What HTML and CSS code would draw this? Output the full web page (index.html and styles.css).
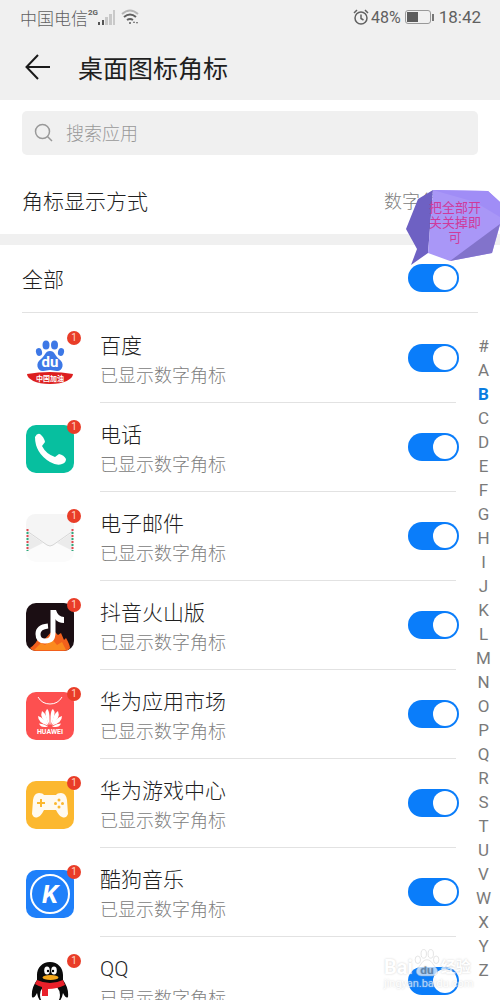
FILE: index.html
```html
<!DOCTYPE html>
<html lang="zh-CN">
<head>
  <meta charset="UTF-8">
  <meta name="viewport" content="width=device-width, initial-scale=1">
  <title>桌面图标角标</title>
  <link rel="stylesheet" href="styles.css">
</head>
<body>

  <div class="screen">

    <!-- Status bar -->
    <div class="status-bar">
      <div class="status-left">
        <span>中国电信</span>
        <span class="network">2G</span>
        <svg class="signal" width="17" height="15" viewBox="0 0 17 15">
          <path d="M0 12h2v3H0zM4 10h2v5H4z" fill="#555"/>
          <path d="M7 7h3v8H7zM11 4h3v11h-3zM15 0h2v15h-2z" fill="#c9c9c9"/>
        </svg>
        <svg width="18" height="16" viewBox="0 0 18 16" fill="none" stroke="#606060" stroke-width="2">
          <path d="M1 5Q9-2 17 5" stroke="#b5b5b5"/>
          <path d="M3 8Q9 3 15 8M6 11Q9 9 12 11"/>
          <circle cx="9" cy="14" r="1" fill="#606060" stroke="none"/>
          <path d="M12 14l1-2 1 2zM15 13l1 2 1-2z" fill="#606060" stroke="none"/>
        </svg>
      </div>
      <div class="status-right">
        <svg width="16" height="16" viewBox="0 0 16 16" fill="none" stroke="#606060" stroke-width="1.5">
          <circle cx="8" cy="9" r="6"/>
          <path d="M8 5.5v4l2.500 1.5M1 4l3-3M15 4l-3-3"/>
        </svg>
        <span class="percent">48%</span>
        <svg class="battery" width="29" height="14" viewBox="0 0 29 14">
          <rect x="0.5" y="0.5" width="25" height="13" rx="2.5" fill="none" stroke="#999"/>
          <path d="M2 2h11v10H2z" fill="#5c5c5c"/>
          <path d="M27 4h2v7h-2z" fill="#777"/>
        </svg>
        <span>18:42</span>
      </div>
    </div>

    <!-- Title bar -->
    <header class="title-bar">
      <button class="back-btn" aria-label="返回">
        <svg width="26" height="26" viewBox="0 0 26 26" fill="none" stroke="#1a1a1a" stroke-width="2">
          <path d="M25 13H2M13 1L1.5 13 13 25"/>
        </svg>
      </button>
      <h1>桌面图标角标</h1>
    </header>

    <!-- Search -->
    <label class="search-box">
      <svg width="20" height="20" viewBox="0 0 20 20" fill="none" stroke="#999" stroke-width="1.5">
        <circle cx="8.5" cy="8.5" r="7"/>
        <path d="M13.5 13.5L18 18"/>
      </svg>
      <input type="search" placeholder="搜索应用" aria-label="搜索应用">
    </label>

    <!-- Badge style -->
    <div class="mode-row">
      <span>角标显示方式</span>
      <span class="mode-value">数字角标</span>
      <div class="tip">
        <svg width="95" height="76" viewBox="0 0 95 76">
          <path d="M13 9L28 0 23 63 6 75 12 59 1 39z" fill="#6e61c3"/>
          <path d="M28 0L83 1 95 12V35L87 63 45 71 23 63z" fill="#a997f7"/>
          <path d="M28 0L83 1 95 12V27L70 12z" fill="#a08df6"/>
          <path d="M45 71L95 34 87 63z" fill="#8273cb"/>
        </svg>
        <p>把全部开关关掉即可</p>
      </div>
    </div>

    <div class="all-row">
      <label for="all">全部</label>
      <input type="checkbox" class="switch" id="all" checked>
    </div>

    <!-- App list -->
    <div class="list-area">
      <ul class="app-list">
        <li class="app">
          <div class="app-icon">
            <svg viewBox="0 0 48 48">
              <g fill="#3d78e6">
                <ellipse cx="13" cy="16" rx="3" ry="4" transform="rotate(-15 13 16)"/>
                <ellipse cx="20" cy="9" rx="3.5" ry="4.5"/>
                <ellipse cx="28.5" cy="9" rx="3.5" ry="4.5"/>
                <ellipse cx="35" cy="16" rx="3" ry="4" transform="rotate(15 35 16)"/>
                <path d="M24 15c5 0 5 5 9 8 6 4 4 12-2 12-3 0-4-1-7-1s-4 1-7 1c-6 0-8-8-2-12 4-3 4-8 9-8z"/>
              </g>
              <text x="24" y="31" class="du">du</text>
              <path d="M1 38q23-4 46 0c0 5-9 10-23 10S1 43 1 38z" fill="#dc1e1e"/>
              <text x="24" y="45" class="ribbon">中国加油</text>
            </svg>
            <span class="badge">1</span>
          </div>
          <div class="app-body">
            <label for="baidu">百度<small>已显示数字角标</small></label>
            <input type="checkbox" class="switch" id="baidu" checked>
          </div>
        </li>
        <li class="app">
          <div class="app-icon">
            <svg viewBox="0 0 48 48">
              <rect width="48" height="48" rx="10" fill="#07bf9f"/>
              <path d="M9 12q2-4 5-3 4 3 5 8l-3 4q4 8 13 11l4-3q5 1 7 5 0 4-4 5-5 2-12-2Q9 28 9 12z" fill="#fff"/>
            </svg>
            <span class="badge">1</span>
          </div>
          <div class="app-body">
            <label for="phone">电话<small>已显示数字角标</small></label>
            <input type="checkbox" class="switch" id="phone" checked>
          </div>
        </li>
        <li class="app">
          <div class="app-icon">
            <svg viewBox="0 0 48 48">
              <rect width="48" height="48" rx="10" fill="#fbfbfb"/>
              <path d="M1 18L17 29 1 37zM47 18L31 29l16 8z" fill="#ebebeb"/>
              <path d="M0 12Q0 0 10 0h28q10 0 10 12v4L27 31q-3 2-6 0L0 16z" fill="#f5f5f5"/>
              <path d="M1 17l20 14q3 2 6 0l20-14" fill="none" stroke="#d6d6d6"/>
              <path d="M1.5 15v22M46.5 15v22" stroke="#e0474f" stroke-width="2" stroke-dasharray="2 4"/>
              <path d="M1.5 18v19M46.5 18v19" stroke="#2fa77c" stroke-width="2" stroke-dasharray="2 4"/>
            </svg>
            <span class="badge">1</span>
          </div>
          <div class="app-body">
            <label for="mail">电子邮件<small>已显示数字角标</small></label>
            <input type="checkbox" class="switch" id="mail" checked>
          </div>
        </li>
        <li class="app">
          <div class="app-icon">
            <svg viewBox="0 0 48 48">
              <rect width="48" height="48" rx="10" fill="#1b0e13"/>
              <path d="M4 45q6-4 9-11l5 3 9-10 5 5 3-2 3 7 2-2q4 7 4 10-2 3-6 3H10q-4 0-6-3z" fill="#f2601c"/>
              <path d="M8 47l7-7 4 2 7-6 5 6 5-3 4 8z" fill="#fb8a1e"/>
              <path d="M27 7v23q0 8-8 8-7 0-7-7t10-8" fill="none" stroke="#fff" stroke-width="5"/>
              <path d="M25 7h5q2 7 8 7v6q-6 0-9-4z" fill="#fff"/>
            </svg>
            <span class="badge">1</span>
          </div>
          <div class="app-body">
            <label for="douyin">抖音火山版<small>已显示数字角标</small></label>
            <input type="checkbox" class="switch" id="douyin" checked>
          </div>
        </li>
        <li class="app">
          <div class="app-icon">
            <svg viewBox="0 0 48 48">
              <rect width="48" height="48" rx="10" fill="#fd5050"/>
              <path d="M12 5q4 7 12 7t12-7" fill="none" stroke="#fff"/>
              <g fill="#fff">
                <path d="M23.5 33Q17 21 21 17q3 1 2.500 16z"/>
                <path d="M24.5 33Q31 21 27 17q-3 1-2.500 16z"/>
                <path d="M22.5 33Q13 26 16 19q5 3 6.500 14z"/>
                <path d="M25.5 33Q35 26 32 19q-5 3-6.500 14z"/>
                <path d="M22 33.5Q12 31 12 24q6 2 10 9.500z"/>
                <path d="M26 33.5Q36 31 36 24q-6 2-10 9.500z"/>
                <path d="M22 34.5q-7 2-9-3 4 0 9 3z"/>
                <path d="M26 34.5q7 2 9-3-4 0-9 3z"/>
              </g>
              <text x="24" y="42" class="huawei">HUAWEI</text>
            </svg>
            <span class="badge">1</span>
          </div>
          <div class="app-body">
            <label for="market">华为应用市场<small>已显示数字角标</small></label>
            <input type="checkbox" class="switch" id="market" checked>
          </div>
        </li>
        <li class="app">
          <div class="app-icon">
            <svg viewBox="0 0 48 48">
              <rect width="48" height="48" rx="10" fill="#fcb82f"/>
              <path d="M13 12q4 0 5 2h12q1-2 5-2 5 0 6 7l1 14q-2 5-6 3-3-1-6-7H18q-3 6-6 7-4 2-6-3l1-14q1-7 6-7z" fill="#fffaf0"/>
              <path d="M15 18v8M11 22h8" stroke="#fcb82f" stroke-width="2"/>
              <g fill="#fcb82f">
                <circle cx="33" cy="19" r="1.5"/><circle cx="33" cy="26" r="1.5"/>
                <circle cx="29.5" cy="22.5" r="1.5"/><circle cx="36.5" cy="22.5" r="1.5"/>
              </g>
            </svg>
            <span class="badge">1</span>
          </div>
          <div class="app-body">
            <label for="game">华为游戏中心<small>已显示数字角标</small></label>
            <input type="checkbox" class="switch" id="game" checked>
          </div>
        </li>
        <li class="app">
          <div class="app-icon">
            <svg viewBox="0 0 48 48">
              <rect width="48" height="48" rx="10" fill="#1f80fa"/>
              <circle cx="24" cy="24" r="19" fill="none" stroke="#fff" stroke-width="2"/>
              <text x="24" y="33" class="kugou">K</text>
            </svg>
            <span class="badge">1</span>
          </div>
          <div class="app-body">
            <label for="kugou">酷狗音乐<small>已显示数字角标</small></label>
            <input type="checkbox" class="switch" id="kugou" checked>
          </div>
        </li>
        <li class="app">
          <div class="app-icon">
            <svg viewBox="0 0 48 48">
              <path d="M24 3c8 0 13 6 13 13v5q6 8 5 17-2 2-5-4-2 12-13 12T11 34q-3 6-5 4-1-9 5-17v-5C11 9 16 3 24 3z" fill="#0b0b0b"/>
              <ellipse cx="24" cy="36" rx="10" ry="11" fill="#fff"/>
              <ellipse cx="21" cy="11.5" rx="2.8" ry="4" fill="#fff"/>
              <ellipse cx="28" cy="11.5" rx="2.8" ry="4" fill="#fff"/>
              <circle cx="22" cy="12" r="1.2"/><circle cx="27" cy="12" r="1.2"/>
              <ellipse cx="24.5" cy="18.5" rx="8" ry="2.5" fill="#f5a81c"/>
              <path d="M11 21q13 6 26 0l2 5q-8 4-17 4v7h-6v-9q-4-1-7-3z" fill="#e8202a"/>
              <ellipse cx="17" cy="46" rx="7" ry="2" fill="#f5a81c"/>
              <ellipse cx="31" cy="46" rx="7" ry="2" fill="#f5a81c"/>
            </svg>
            <span class="badge">1</span>
          </div>
          <div class="app-body">
            <label for="qq">QQ<small>已显示数字角标</small></label>
            <input type="checkbox" class="switch" id="qq" checked>
          </div>
        </li>
      </ul>

      <nav class="letters">
        <a href="#">#</a><a href="#">A</a><a href="#" class="active">B</a><a href="#">C</a><a href="#">D</a><a href="#">E</a><a href="#">F</a><a href="#">G</a><a href="#">H</a><a href="#">I</a><a href="#">J</a><a href="#">K</a><a href="#">L</a><a href="#">M</a><a href="#">N</a><a href="#">O</a><a href="#">P</a><a href="#">Q</a><a href="#">R</a><a href="#">S</a><a href="#">T</a><a href="#">U</a><a href="#">V</a><a href="#">W</a><a href="#">X</a><a href="#">Y</a><a href="#">Z</a>
      </nav>
    </div>

    <!-- Watermark -->
    <div class="watermark">
      <div class="mark-logo">
        <span>Bai</span>
        <svg width="28" height="28" viewBox="0 0 24 26" fill="#fff" stroke="#bbb" stroke-width="0.5">
          <ellipse cx="3.5" cy="10" rx="2.5" ry="3.5"/>
          <ellipse cx="9" cy="4.5" rx="2.5" ry="4"/>
          <ellipse cx="15.5" cy="4.5" rx="2.5" ry="4"/>
          <ellipse cx="20.5" cy="10" rx="2.5" ry="3.5"/>
          <path d="M12 10c4 0 5 4 8 7 4 4 1 8-3 8H7c-4 0-7-4-3-8 3-3 4-7 8-7z"/>
          <text x="12" y="23" class="mark-du">du</text>
        </svg>
        <span class="mark-cn">经验</span>
      </div>
      <div class="mark-url">jingyan.baidu.com</div>
    </div>

  </div>

</body>
</html>
```
FILE: styles.css
```css
* {
  box-sizing: border-box;
}

body {
  margin: 0;
  background: #fff;
  color: #1f1f1f;
  font-family: Roboto, "Noto Sans CJK SC", sans-serif;
  font-weight: 300;
}

.screen {
  position: relative;
  display: flex;
  flex-direction: column;
  height: 100vh;
  overflow: hidden;
}

/* status bar */
.status-bar {
  display: flex;
  flex: none;
  justify-content: space-between;
  height: 34px;
  padding: 0 19px 0 20px;
  background: #f0f0f0;
  color: #606060;
  font-size: 17px;
  font-weight: 400;
}

.status-left,
.status-right {
  display: flex;
  align-items: center;
}

.status-left {
  font-weight: 300;
}

.network {
  align-self: flex-start;
  padding-top: 8px;
  font-size: 8px;
  line-height: 9px;
  font-weight: 700;
}

.signal {
  margin-right: 6px;
}

.percent {
  margin-left: 2px;
  font-size: 16px;
}

.battery {
  margin: 0 5px 0 4px;
}

/* title */
.title-bar {
  display: flex;
  flex: none;
  align-items: center;
  gap: 27px;
  height: 66px;
  padding: 0 25px;
  background: #f0f0f0;
}

.back-btn {
  display: flex;
  padding: 0;
  border: none;
  background: none;
}

h1 {
  margin: 0;
  font-size: 25px;
  font-weight: 400;
}

/* search */
.search-box {
  display: flex;
  flex: none;
  align-items: center;
  gap: 12px;
  height: 44px;
  margin: 11px 22px 0;
  padding: 0 12px;
  border-radius: 5px;
  background: #f0f0f0;
}

.search-box input {
  flex: 1;
  min-width: 0;
  padding: 0;
  border: none;
  outline: none;
  background: none;
  font: inherit;
  font-size: 18px;
}

.search-box input::placeholder {
  color: #999;
}

/* settings rows */
.mode-row {
  position: relative;
  display: flex;
  flex: none;
  align-items: center;
  justify-content: space-between;
  height: 90px;
  padding: 10px 44px 0 22px;
  border-bottom: 11px solid #f0f0f0;
  font-size: 21px;
}

.mode-value {
  color: #808080;
  font-size: 18px;
}

.tip {
  position: absolute;
  z-index: 1;
  top: 35px;
  right: 0;
  width: 95px;
  height: 76px;
}

.tip p {
  position: absolute;
  top: 10px;
  left: 24px;
  width: 52px;
  margin: 0;
  color: #cf3a9c;
  font-size: 13px;
  font-weight: 400;
  line-height: 15px;
  text-align: center;
}

.all-row {
  display: flex;
  flex: none;
  align-items: center;
  justify-content: space-between;
  height: 68px;
  margin: 0 22px;
  padding: 0 19px 2px 0;
  border-bottom: 1px solid #e2e2e2;
  font-size: 21px;
}

.switch {
  flex: none;
  width: 51px;
  height: 28px;
  margin: 0;
  padding: 2px;
  border-radius: 14px;
  background: #ccc;
  appearance: none;
}

.switch::before {
  content: "";
  display: block;
  width: 24px;
  height: 24px;
  border-radius: 50%;
  background: #fff;
}

.switch:checked {
  background: #0a7dfa;
}

.switch:checked::before {
  margin-left: auto;
}

/* app list */
.list-area {
  display: flex;
  flex: 1;
  min-height: 0;
}

.app-list {
  flex: 1;
  margin: 0;
  padding: 1px 0 0 26px;
  list-style: none;
}

.app {
  display: flex;
  gap: 26px;
  height: 89px;
}

.app-icon {
  position: relative;
  flex: none;
  width: 48px;
  height: 48px;
  margin-top: 22px;
}

.app-icon svg {
  display: block;
}

.badge {
  position: absolute;
  top: -5px;
  right: -7px;
  width: 14px;
  height: 14px;
  border-radius: 50%;
  background: #e93d28;
  color: #ffd8c4;
  font-size: 10px;
  font-weight: 400;
  line-height: 14px;
  text-align: center;
}

.app-body {
  display: flex;
  flex: 1;
  align-items: center;
  justify-content: space-between;
  border-bottom: 1px solid #e2e2e2;
}

.app-body .switch {
  margin-right: -3px;
}

.app-body label {
  padding-top: 6px;
  font-size: 21px;
  line-height: 29px;
}

.app-body small {
  display: block;
  color: #808080;
  font-size: 18px;
}

.letters {
  display: flex;
  flex-direction: column;
  width: 44px;
  padding: 21px 0 0 11px;
}

.letters a {
  flex: none;
  height: 24px;
  color: #7a7a7a;
  font-size: 17px;
  font-weight: 400;
  line-height: 24px;
  text-align: center;
  text-decoration: none;
}

.letters .active {
  color: #0a7de0;
  font-weight: 700;
}

/* lettering in the icons */
.du,
.ribbon,
.huawei,
.kugou,
.mark-du {
  fill: #fff;
  font-weight: 700;
  text-anchor: middle;
}

.du {
  font-size: 15px;
}

.ribbon,
.huawei {
  font-size: 7px;
}

.kugou {
  font-size: 26px;
  font-style: italic;
}

/* watermark */
.watermark {
  position: absolute;
  right: 26px;
  bottom: 10px;
  z-index: 2;
  width: 90px;
  color: #fff;
  opacity: 0.7;
  text-shadow: 0 0 2px #bbb;
}

.mark-logo {
  display: flex;
  align-items: flex-end;
  font-size: 20px;
  font-weight: 700;
  line-height: 20px;
}

.mark-cn {
  font-size: 15px;
}

.mark-du {
  fill: #888;
  stroke: none;
  font-size: 11px;
}

.mark-url {
  font-size: 11px;
  font-weight: 400;
  line-height: 13px;
}
```
